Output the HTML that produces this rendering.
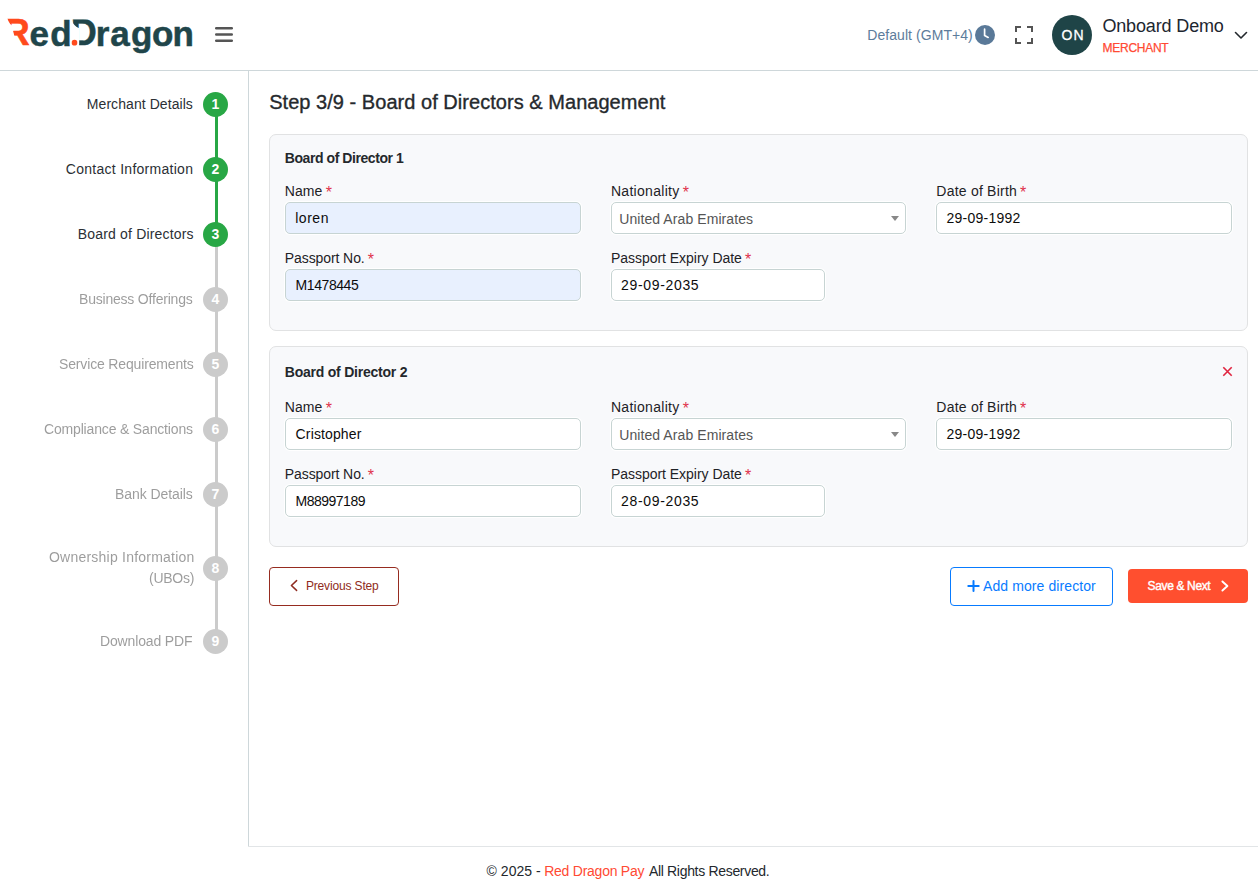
<!DOCTYPE html>
<html lang="en">
<head>
<meta charset="utf-8">
<title>Red Dragon Pay - Merchant Onboarding</title>
<style>
*{box-sizing:border-box;margin:0;padding:0}
html,body{width:1258px;height:892px;overflow:hidden;background:#fff}
body{position:relative;font-family:"Liberation Sans",sans-serif;color:#23282d}
.t{position:absolute;white-space:nowrap;line-height:1;font-family:"Liberation Sans",sans-serif}
.abs{position:absolute}
.hline{position:absolute;left:0;top:70px;width:1258px;height:1px;background:#ced7da}
.vline{position:absolute;left:248px;top:71px;width:1px;height:776px;background:#ced7da}
.fline{position:absolute;left:248px;top:846px;width:1010px;height:1px;background:#e2e5e7}
.card{position:absolute;left:269px;width:979px;background:#f8f9fb;border:1px solid #e1e2e3;border-radius:7px}
.inp{position:absolute;height:32px;background:#fff;border:1px solid #c7d4d3;border-radius:5px;box-shadow:0 0 0 1px #fff}
.inp.af{background:#e8f0fe}
.star{position:absolute;color:#e0334c;font:400 16px/1 "Liberation Sans",sans-serif}
.circ{position:absolute;left:203px;width:25px;height:25px;border-radius:50%;color:#fff;font:700 14px/25px "Liberation Sans",sans-serif;text-align:center}
.g{background:#28a745}.d{background:#cbcbcb}
.btn{position:absolute;border-radius:4px}
#logo{position:absolute;left:0;top:0;font:700 34px/1 "Liberation Sans",sans-serif;color:#20454a;white-space:nowrap;-webkit-text-stroke:0.5px}
#logo span{position:absolute;top:0}
</style>
</head>
<body>
<!-- header -->
<div id="logo"><span style="left:3.78px;top:15.39px;font-size:36.0px;color:#ff4a1c;clip-path:path('M3.52,2.61 L27.22,2.61 L27.22,32.61 L13.52,32.61 L9.42,15.81 L10.82,11.31 Q5.42,9.81 3.52,2.61 Z')">R</span><span style="left:29.57px;top:15.95px;font-size:35.0px;">e</span><span style="left:50.17px;top:15.95px;font-size:35.0px;">d</span><span style="left:68.00px;top:6.20px;font-size:48.0px;color:#ff4a1c;-webkit-text-stroke:0;clip-path:circle(2.85px at 6.50px 36.50px)">.</span><span style="left:70.85px;top:15.29px;font-size:36.0px;clip-path:path('M0.65,4.21 L26.15,4.21 L26.15,32.71 L8.35,32.71 L8.35,12.91 Q2.95,11.21 0.65,4.21 Z')">D</span><span style="left:95.64px;top:15.95px;font-size:35.0px;">r</span><span style="left:110.17px;top:15.95px;font-size:35.0px;">a</span><span style="left:130.97px;top:15.95px;font-size:35.0px;">g</span><span style="left:151.97px;top:15.95px;font-size:35.0px;">o</span><span style="left:172.54px;top:15.95px;font-size:35.0px;">n</span></div>
<svg class="abs" style="left:215px;top:26px" width="18" height="17" viewBox="0 0 18 17"><g fill="#555"><rect x="0" y="1" width="18" height="2.5" rx="1.2"/><rect x="0" y="7.2" width="18" height="2.5" rx="1.2"/><rect x="0" y="13.4" width="18" height="2.5" rx="1.2"/></g></svg>
<svg class="abs" style="left:975px;top:24.5px" width="20" height="20" viewBox="0 0 20 20"><circle cx="10" cy="10" r="10" fill="#5a7998"/><path d="M9.6 4.2 V10.4 L13.2 12.4" fill="none" stroke="#fff" stroke-width="1.7" stroke-linecap="round" stroke-linejoin="round"/></svg>
<svg class="abs" style="left:1015px;top:26px" width="18" height="18" viewBox="0 0 18 18"><path d="M1 6V1h5M12 1h5v5M17 12v5h-5M6 17H1v-5" fill="none" stroke="#555" stroke-width="2"/></svg>
<div class="abs" style="left:1052px;top:15px;width:40px;height:40px;border-radius:50%;background:#1f4447"></div>
<svg class="abs" style="left:1234px;top:31px" width="14" height="9" viewBox="0 0 14 9"><path d="M1.5 1.5 L7 7 L12.5 1.5" fill="none" stroke="#23282d" stroke-width="1.6" stroke-linecap="round" stroke-linejoin="round"/></svg>
<div class="hline"></div><div class="vline"></div><div class="fline"></div>
<!-- sidebar stepper -->
<div class="abs" style="left:215px;top:104px;width:3px;height:130px;background:#28a745"></div>
<div class="abs" style="left:215px;top:234px;width:3px;height:407px;background:#cbcbcb"></div>
<div class="circ g" style="top:92px">1</div>
<div class="circ g" style="top:157px">2</div>
<div class="circ g" style="top:222px">3</div>
<div class="circ d" style="top:287px">4</div>
<div class="circ d" style="top:352px">5</div>
<div class="circ d" style="top:417px">6</div>
<div class="circ d" style="top:482px">7</div>
<div class="circ d" style="top:556px">8</div>
<div class="circ d" style="top:629px">9</div>
<!-- cards -->
<div class="card" style="top:134px;height:197px"></div>
<div class="card" style="top:346px;height:201px"></div>
<div class="inp af" style="left:285px;top:202px;width:296px"></div>
<div class="inp" style="left:611px;top:202px;width:295px"></div>
<svg class="abs" style="left:891px;top:216px" width="8" height="5" viewBox="0 0 8 5"><path d="M0 0H8L4 5Z" fill="#888"/></svg>
<div class="inp" style="left:936px;top:202px;width:296px"></div>
<div class="inp af" style="left:285px;top:269px;width:296px"></div>
<div class="inp" style="left:611px;top:269px;width:214px"></div>
<span class="star" style="left:325.8px;top:185px">*</span>
<span class="star" style="left:682.8px;top:185px">*</span>
<span class="star" style="left:1020.0px;top:185px">*</span>
<span class="star" style="left:367.8px;top:252px">*</span>
<span class="star" style="left:745.0px;top:252px">*</span>
<div class="inp" style="left:285px;top:418px;width:296px"></div>
<div class="inp" style="left:611px;top:418px;width:295px"></div>
<svg class="abs" style="left:891px;top:432px" width="8" height="5" viewBox="0 0 8 5"><path d="M0 0H8L4 5Z" fill="#888"/></svg>
<div class="inp" style="left:936px;top:418px;width:296px"></div>
<div class="inp" style="left:285px;top:485px;width:296px"></div>
<div class="inp" style="left:611px;top:485px;width:214px"></div>
<span class="star" style="left:325.8px;top:401px">*</span>
<span class="star" style="left:682.8px;top:401px">*</span>
<span class="star" style="left:1020.0px;top:401px">*</span>
<span class="star" style="left:367.8px;top:468px">*</span>
<span class="star" style="left:745.0px;top:468px">*</span>
<!-- buttons -->
<div class="btn" style="left:269px;top:567px;width:130px;height:39px;border:1px solid #962c20;background:#fff"></div>
<svg class="abs" style="left:289px;top:579px" width="10" height="13" viewBox="0 0 10 13"><path d="M7.6 1.6 L2.4 6.5 L7.6 11.4" fill="none" stroke="#8f2b20" stroke-width="1.5" stroke-linecap="round" stroke-linejoin="round"/></svg>
<div class="btn" style="left:950px;top:567px;width:163px;height:39px;border:1px solid #087bff;background:#fff"></div>
<svg class="abs" style="left:967px;top:580px" width="13" height="12" viewBox="0 0 13 12"><path d="M6.5 1V11M1.3 6H11.7" fill="none" stroke="#087bff" stroke-width="2" stroke-linecap="round"/></svg>
<div class="btn" style="left:1128px;top:569px;width:120px;height:34px;background:#ff4f2f"></div>
<svg class="abs" style="left:1220px;top:580px" width="10" height="12" viewBox="0 0 10 12"><path d="M2.4 1.5 L7.4 6 L2.4 10.5" fill="none" stroke="#fff" stroke-width="1.9" stroke-linecap="round" stroke-linejoin="round"/></svg>
<svg class="abs" style="left:1222px;top:366px" width="11" height="11" viewBox="0 0 11 11"><path d="M1.3 1.3 L9.7 9.7 M9.7 1.3 L1.3 9.7" fill="none" stroke="#e0243f" stroke-width="1.6"/></svg>
<!-- text -->
<header>
<span class="t" style="left:867.3px;top:28px;font-size:14px;font-weight:400;color:#5d7c9b;letter-spacing:0.057px">Default (GMT+4)</span>
<span class="t" style="left:1061.5px;top:28px;font-size:14px;font-weight:400;color:#ffffff;letter-spacing:1.000px;-webkit-text-stroke:0.3px">ON</span>
<span class="t" style="left:1102.4px;top:17px;font-size:18px;font-weight:400;color:#1d2630;letter-spacing:-0.145px">Onboard Demo</span>
<span class="t" style="left:1102.6px;top:42px;font-size:12px;font-weight:400;color:#ff4a33;letter-spacing:-0.286px;-webkit-text-stroke:0.25px">MERCHANT</span>
</header>
<aside>
<span class="t" style="left:86.8px;top:97px;font-size:14px;font-weight:400;color:#2b3035;letter-spacing:0.067px">Merchant Details</span>
<span class="t" style="left:65.8px;top:162px;font-size:14px;font-weight:400;color:#2b3035;letter-spacing:0.278px">Contact Information</span>
<span class="t" style="left:77.8px;top:227px;font-size:14px;font-weight:400;color:#2b3035;letter-spacing:0.176px">Board of Directors</span>
<span class="t" style="left:79.2px;top:292px;font-size:14px;font-weight:400;color:#2a2a2a;letter-spacing:-0.206px;opacity:.46;will-change:transform">Business Offerings</span>
<span class="t" style="left:58.6px;top:357px;font-size:14px;font-weight:400;color:#2a2a2a;letter-spacing:-0.153px;opacity:.46;will-change:transform">Service Requirements</span>
<span class="t" style="left:44.2px;top:422px;font-size:14px;font-weight:400;color:#2a2a2a;letter-spacing:-0.167px;opacity:.46;will-change:transform">Compliance &amp; Sanctions</span>
<span class="t" style="left:115.3px;top:487px;font-size:14px;font-weight:400;color:#2a2a2a;letter-spacing:-0.073px;opacity:.46;will-change:transform">Bank Details</span>
<span class="t" style="left:48.7px;top:550px;font-size:14px;font-weight:400;color:#2a2a2a;letter-spacing:0.225px;opacity:.46;will-change:transform">Ownership Information</span>
<span class="t" style="left:148.9px;top:571px;font-size:14px;font-weight:400;color:#2a2a2a;letter-spacing:-0.260px;opacity:.46;will-change:transform">(UBOs)</span>
<span class="t" style="left:99.6px;top:634px;font-size:14px;font-weight:400;color:#2a2a2a;letter-spacing:-0.145px;opacity:.46;will-change:transform">Download PDF</span>
</aside>
<main>
<span class="t" style="left:269.2px;top:92px;font-size:20px;font-weight:400;color:#25292d;letter-spacing:0.037px;-webkit-text-stroke:0.35px">Step 3/9 - Board of Directors &amp; Management</span>
<span class="t" style="left:284.8px;top:151px;font-size:14px;font-weight:700;color:#24282c;letter-spacing:-0.433px">Board of Director 1</span>
<span class="t" style="left:284.8px;top:184px;font-size:14px;font-weight:400;color:#1e2226;letter-spacing:0.033px">Name</span>
<span class="t" style="left:610.9px;top:184px;font-size:14px;font-weight:400;color:#1e2226;letter-spacing:0.300px">Nationality</span>
<span class="t" style="left:936.3px;top:184px;font-size:14px;font-weight:400;color:#1e2226;letter-spacing:0.225px">Date of Birth</span>
<span class="t" style="left:284.8px;top:251px;font-size:14px;font-weight:400;color:#1e2226;letter-spacing:-0.091px">Passport No.</span>
<span class="t" style="left:610.9px;top:251px;font-size:14px;font-weight:400;color:#1e2226;letter-spacing:-0.026px">Passport Expiry Date</span>
<span class="t" style="left:619.2px;top:212px;font-size:14px;font-weight:400;color:#555555;letter-spacing:0.084px">United Arab Emirates</span>
<span class="t" style="left:946.4px;top:211px;font-size:14px;font-weight:400;color:#0c0c0c;letter-spacing:0.267px">29-09-1992</span>
<span class="t" style="left:284.8px;top:365px;font-size:14px;font-weight:700;color:#24282c;letter-spacing:-0.228px">Board of Director 2</span>
<span class="t" style="left:284.8px;top:400px;font-size:14px;font-weight:400;color:#1e2226;letter-spacing:0.033px">Name</span>
<span class="t" style="left:610.9px;top:400px;font-size:14px;font-weight:400;color:#1e2226;letter-spacing:0.300px">Nationality</span>
<span class="t" style="left:936.3px;top:400px;font-size:14px;font-weight:400;color:#1e2226;letter-spacing:0.225px">Date of Birth</span>
<span class="t" style="left:284.8px;top:467px;font-size:14px;font-weight:400;color:#1e2226;letter-spacing:-0.091px">Passport No.</span>
<span class="t" style="left:610.9px;top:467px;font-size:14px;font-weight:400;color:#1e2226;letter-spacing:-0.026px">Passport Expiry Date</span>
<span class="t" style="left:619.2px;top:428px;font-size:14px;font-weight:400;color:#555555;letter-spacing:0.084px">United Arab Emirates</span>
<span class="t" style="left:946.4px;top:427px;font-size:14px;font-weight:400;color:#0c0c0c;letter-spacing:0.267px">29-09-1992</span>
<span class="t" style="left:295.2px;top:211px;font-size:14px;font-weight:400;color:#0c0c0c;letter-spacing:0.525px">loren</span>
<span class="t" style="left:295.6px;top:278px;font-size:14px;font-weight:400;color:#0c0c0c;letter-spacing:-0.429px">M1478445</span>
<span class="t" style="left:621.1px;top:278px;font-size:14px;font-weight:400;color:#0c0c0c;letter-spacing:0.656px">29-09-2035</span>
<span class="t" style="left:295.6px;top:427px;font-size:14px;font-weight:400;color:#0c0c0c;letter-spacing:0.133px">Cristopher</span>
<span class="t" style="left:295.6px;top:494px;font-size:14px;font-weight:400;color:#0c0c0c;letter-spacing:-0.513px">M88997189</span>
<span class="t" style="left:621.1px;top:494px;font-size:14px;font-weight:400;color:#0c0c0c;letter-spacing:0.656px">28-09-2035</span>
<span class="t" style="left:305.9px;top:580px;font-size:12px;font-weight:400;color:#8f2b20;letter-spacing:-0.150px">Previous Step</span>
<span class="t" style="left:983.0px;top:579px;font-size:14px;font-weight:400;color:#087bff;letter-spacing:0.094px">Add more director</span>
<span class="t" style="left:1147.5px;top:580px;font-size:12px;font-weight:400;color:#ffffff;letter-spacing:-0.350px;-webkit-text-stroke:0.4px">Save &amp; Next</span>
</main>
<footer>
<span class="t" style="left:486.6px;top:864px;font-size:14px;font-weight:400;color:#23282d;letter-spacing:0.014px">© 2025 -</span>
<span class="t" style="left:544.2px;top:864px;font-size:14px;font-weight:400;color:#ff4a33;letter-spacing:-0.246px">Red Dragon Pay</span>
<span class="t" style="left:648.9px;top:864px;font-size:14px;font-weight:400;color:#23282d;letter-spacing:-0.316px">All Rights Reserved.</span>
</footer>
</body>
</html>
